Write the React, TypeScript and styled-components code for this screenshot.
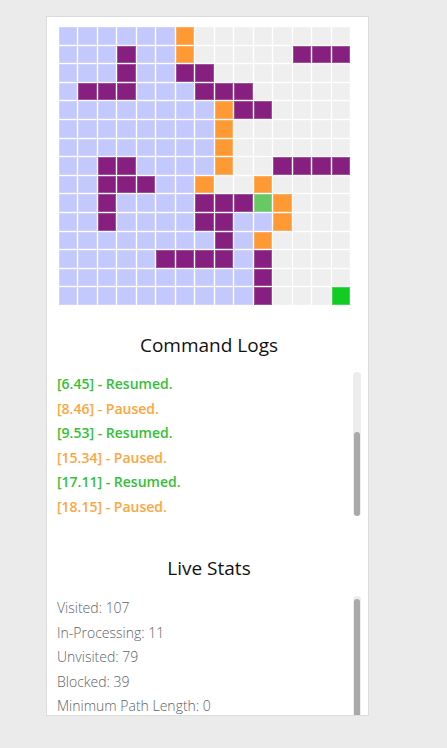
import styled, { createGlobalStyle } from 'styled-components';

const GlobalStyle = createGlobalStyle`
	html, body {
		margin: 0;
		padding: 0;
		background: #ebebeb;
		font-family: 'Open Sans', 'Noto Sans', sans-serif;
	}
`;

type Cell = 'L' | 'G' | 'P' | 'O' | 'S' | 'E';

const MAZE = [
	'LLLLLLOGGGGGGGG',
	'LLLPLLOGGGGGPPP',
	'LLLPLLPPGGGGGGG',
	'LPPPLLLPPPGGGGG',
	'LLLLLLLLOPPGGGG',
	'LLLLLLLLOGGGGGG',
	'LLLLLLLLOGGGGGG',
	'LLPPLLLLOGGPPPP',
	'LLPPPLLOGGOGGGG',
	'LLPLLLLPPPSOGGG',
	'LLPLLLLPPLLOGGG',
	'LLLLLLLLPLOGGGG',
	'LLLLLPPPPLPGGGG',
	'LLLLLLLLLLPGGGG',
	'LLLLLLLLLLPGGGE',
];

const cellColors: Record<Cell, string> = {
	L: '#c3c8fd',
	G: '#efefef',
	P: '#871f80',
	O: '#ff9933',
	S: '#66c966',
	E: '#11cc22',
};

const logs = [
	{ time: '6.45', text: 'Resumed.', kind: 'resume' },
	{ time: '8.46', text: 'Paused.', kind: 'pause' },
	{ time: '9.53', text: 'Resumed.', kind: 'resume' },
	{ time: '15.34', text: 'Paused.', kind: 'pause' },
	{ time: '17.11', text: 'Resumed.', kind: 'resume' },
	{ time: '18.15', text: 'Paused.', kind: 'pause' },
];

const stats = [
	['Visited', 107],
	['In-Processing', 11],
	['Unvisited', 79],
	['Blocked', 39],
	['Minimum Path Length', 0],
];

const Page = styled.div`
	padding: 16px 0 0 46px;
`;

const Card = styled.div`
	box-sizing: border-box;
	width: 323px;
	height: 700px;
	overflow: hidden;
	background: #fff;
	border: 1px solid #dcdcdc;
	padding: 10px 7px 0 10px;
`;

const Grid = styled.div`
	display: grid;
	grid-template-columns: repeat(15, 1fr);
	grid-template-rows: repeat(15, 1fr);
	gap: 1px;
	width: 291px;
	height: 278px;
	margin-left: 2px;
	background: #fff;
`;

const Square = styled.div<{ $kind: Cell }>`
	background: ${(p) => cellColors[p.$kind]};
	box-shadow: inset 0 0 0 1px rgba(255, 255, 255, 0.22);
`;

const Section = styled.div<{ $top: number }>`
	margin-top: ${(p) => p.$top}px;
`;

const Title = styled.h3`
	margin: 0;
	text-align: center;
	font-size: 19px;
	font-weight: 400;
	color: #111;
	line-height: 24px;
`;

const ScrollArea = styled.div<{ $height: number; $top: number }>`
	display: flex;
	height: ${(p) => p.$height}px;
	margin-top: ${(p) => p.$top}px;
`;

const ScrollContent = styled.div`
	flex: 1;
	overflow: hidden;
`;

const Track = styled.div`
	box-sizing: border-box;
	width: 8px;
	padding: 0 1px;
	border-radius: 4px;
	background: #ededf0;
	display: flex;
	flex-direction: column;
`;

const Thumb = styled.div<{ $offset: number; $size: string }>`
	margin-top: ${(p) => p.$offset}px;
	height: ${(p) => p.$size};
	border-radius: 3px;
	background: #a9a9a9;
`;

const LogLine = styled.div<{ $kind: string }>`
	font-size: 14px;
	font-weight: 600;
	line-height: 24.5px;
	color: ${(p) => (p.$kind === 'resume' ? '#36c036' : '#ffa53f')};
`;

const StatLine = styled.div`
	font-size: 14px;
	font-weight: 300;
	line-height: 24.5px;
	color: #5c636b;
`;

const App = () => {
	return (
		<Page>
			<GlobalStyle />
			<Card>
				<Grid>
					{MAZE.flatMap((row, r) =>
						row.split('').map((c, i) => <Square key={`${r}-${i}`} $kind={c as Cell} />)
					)}
				</Grid>

				<Section $top={28}>
					<Title>Command Logs</Title>
					<ScrollArea $height={144} $top={15}>
						<ScrollContent>
							{logs.map((l) => (
								<LogLine key={l.time} $kind={l.kind}>
									[{l.time}] - {l.text}
								</LogLine>
							))}
						</ScrollContent>
						<Track>
							<Thumb $offset={60} $size="84px" />
						</Track>
					</ScrollArea>
				</Section>

				<Section $top={40}>
					<Title>Live Stats</Title>
					<ScrollArea $height={140} $top={16}>
						<ScrollContent>
							{stats.map(([label, value]) => (
								<StatLine key={label}>
									{label}: {value}
								</StatLine>
							))}
						</ScrollContent>
						<Track>
							<Thumb $offset={3} $size="100%" />
						</Track>
					</ScrollArea>
				</Section>
			</Card>
		</Page>
	);
};

export default App;
